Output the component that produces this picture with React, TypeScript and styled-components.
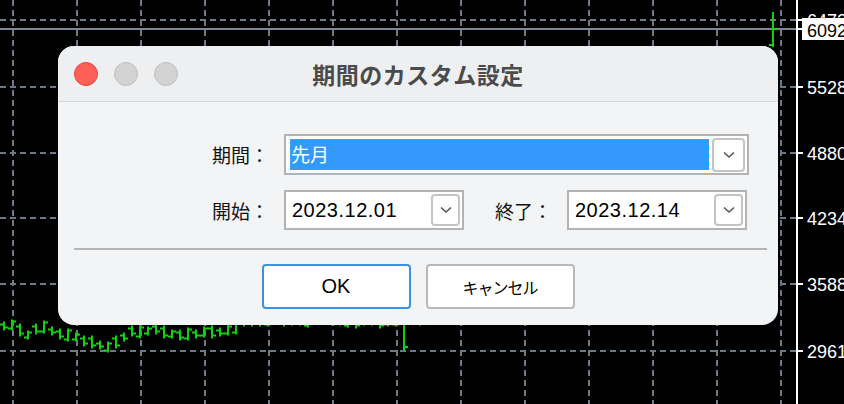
import styled, { createGlobalStyle } from 'styled-components';

const GlobalStyle = createGlobalStyle`
  html, body {
    margin: 0;
    padding: 0;
    background: #000;
  }
  #root {
    width: 844px;
    height: 404px;
    overflow: hidden;
  }
`;

const Screen = styled.div`
  position: relative;
  width: 844px;
  height: 404px;
  background: #000;
  font-family: 'Liberation Sans', 'Noto Sans CJK JP', sans-serif;
`;

const ChartSvg = styled.svg`
  display: block;
`;

const Dialog = styled.div`
  position: absolute;
  left: 58px;
  top: 46px;
  width: 720px;
  height: 279px;
  border-radius: 16px;
  overflow: hidden;
  background: #f3f4f6;
  display: flex;
  flex-direction: column;
`;

const TitleBar = styled.div`
  position: relative;
  height: 55px;
  flex: none;
  display: flex;
  align-items: center;
  justify-content: center;
  background: #eeeff1;
  border-bottom: 1px solid #d6d7d9;
`;

const Lights = styled.div`
  position: absolute;
  left: 16px;
  top: 16px;
  display: flex;
  gap: 16px;
`;

const Light = styled.span<{ $color: string; $edge: string }>`
  width: 22px;
  height: 22px;
  border-radius: 50%;
  background: ${(p) => p.$color};
  border: 1px solid ${(p) => p.$edge};
`;

const Title = styled.div`
  font-family: 'Noto Sans CJK JP', sans-serif;
  font-size: 23px;
  font-weight: 700;
  letter-spacing: 0.5px;
  color: #4b4b4b;
`;

const Body = styled.div`
  flex: 1;
  display: flex;
  flex-direction: column;
  padding: 32px 0 16px;
`;

const FormRow = styled.div<{ $mt?: number }>`
  display: flex;
  align-items: center;
  padding-left: 154px;
  margin-top: ${(p) => p.$mt ?? 0}px;
`;

const Label = styled.div<{ $ml?: number }>`
  width: 58px;
  margin-left: ${(p) => p.$ml ?? 0}px;
  margin-right: 14px;
  font-family: 'Noto Sans CJK JP', sans-serif;
  font-size: 19px;
  color: #111;
  white-space: nowrap;
`;

const Field = styled.div<{ $w: number; $h: number }>`
  box-sizing: border-box;
  width: ${(p) => p.$w}px;
  height: ${(p) => p.$h}px;
  border: 2px solid #b3b3b3;
  background: #fff;
  display: flex;
  align-items: center;
  gap: 3px;
  padding: 0 2px 0 4px;
`;

const Selection = styled.div`
  flex: 1;
  box-sizing: border-box;
  height: 31px;
  background: #3399fb;
  outline: 1px dotted #e0782a;
  outline-offset: -1px;
  color: #fff;
  font-family: 'Noto Sans CJK JP', sans-serif;
  font-size: 19px;
  line-height: 30px;
  padding-left: 1px;
`;

const DateText = styled.div`
  flex: 1;
  padding-left: 2px;
  font-size: 20px;
  letter-spacing: 0.5px;
  color: #000;
`;

const DropButton = styled.div<{ $w: number; $h: number }>`
  box-sizing: border-box;
  width: ${(p) => p.$w}px;
  height: ${(p) => p.$h}px;
  border: 2px solid #c4c4c4;
  border-radius: 4px;
  background: #fff;
  display: flex;
  align-items: center;
  justify-content: center;
`;

const Separator = styled.div`
  height: 2px;
  margin: 18px 11px 0 16px;
  background: #b5b5b5;
`;

const ButtonRow = styled.div`
  display: flex;
  justify-content: center;
  gap: 15px;
  margin-top: 14px;
`;

const Button = styled.div<{ $primary?: boolean }>`
  box-sizing: border-box;
  width: 149px;
  height: 45px;
  background: #fff;
  border: 2px solid ${(p) => (p.$primary ? '#3e8fe8' : '#b8b8b8')};
  border-radius: 4px;
  display: flex;
  align-items: center;
  justify-content: center;
  color: #000;
  font-size: ${(p) => (p.$primary ? 20 : 16)}px;
  letter-spacing: ${(p) => (p.$primary ? 0 : -1)}px;
  font-family: ${(p) =>
    p.$primary ? "'Liberation Sans', sans-serif" : "'Noto Sans CJK JP', sans-serif"};
`;

function Chevron() {
  return (
    <svg width="12" height="8" viewBox="0 0 12 8">
      <polyline points="1,1.5 6,6 11,1.5" fill="none" stroke="#555" strokeWidth="1.6" />
    </svg>
  );
}

const gridX = [13, 77, 141, 205, 269, 333, 397, 461, 525, 589, 653, 717, 781];
const gridY = [20, 87, 153, 218, 284, 351];
const priceLabels = ['6472', '5528', '4880', '4234', '3588', '2961'];

// bar centres, one every 8px from x = 4
const centers = [
  326, 325, 330, 335, 329, 327, 331, 334, 335, 337, 341, 342, 345, 347, 342, 337, 331, 332,
  331, 329, 332, 334, 335, 334, 334, 332, 332, 332, 330, 328, 322, 321, 320, 322, 319, 320,
  321, 320, 321, 320, 318, 319, 321, 322, 322, 321, 320, 322, 322, 321, 335, 319, 320,
];

const bars = centers.map((c, i) => {
  const x = 4 + i * 8;
  const len = x === 404 ? 30 : 9 + (i % 3) * 2;
  const hi = c - len / 2;
  const lo = c + len / 2;
  const up = i % 4 === 1 || i % 5 === 3;
  return { x, hi, lo, open: up ? lo - 2 : hi + 3, close: up ? hi + 2 : lo - 3 };
});
bars.push({ x: 773, hi: 12, lo: 47, open: 45, close: 29 });

function Chart() {
  return (
    <ChartSvg width="844" height="404" viewBox="0 0 844 404">
      <rect width="844" height="404" fill="#000" />
      {gridX.map((x) => (
        <line key={`v${x}`} x1={x} y1="0" x2={x} y2="404" stroke="#6d7987" strokeWidth="2" strokeDasharray="6 4" />
      ))}
      {gridY.map((y) => (
        <line key={`h${y}`} x1="0" y1={y} x2="797" y2={y} stroke="#6d7987" strokeWidth="2" strokeDasharray="6 4" />
      ))}
      <line x1="0" y1="29" x2="797" y2="29" stroke="#7d8896" strokeWidth="2" />
      {bars.map((b) => (
        <g key={b.x} stroke="#0fd20f" strokeWidth="2">
          <line x1={b.x} y1={b.hi} x2={b.x} y2={b.lo} />
          <line x1={b.x - 4} y1={b.open} x2={b.x} y2={b.open} />
          <line x1={b.x} y1={b.close} x2={b.x + 4} y2={b.close} />
        </g>
      ))}
      <line x1="797" y1="0" x2="797" y2="404" stroke="#fff" strokeWidth="2" />
      {gridY.map((y, i) => (
        <g key={`l${y}`}>
          <line x1="797" y1={y} x2="803" y2={y} stroke="#fff" strokeWidth="2" />
          <text x="807" y={y + 7} fill="#fff" fontSize="18" fontFamily="Liberation Sans, sans-serif">
            {priceLabels[i]}
          </text>
        </g>
      ))}
      {/* current price tag covers the top label */}
      <rect x="802" y="18" width="42" height="22" fill="#fff" />
      <line x1="797" y1="29" x2="803" y2="29" stroke="#fff" strokeWidth="2" />
      <text x="807" y="37" fill="#000" fontSize="18" fontFamily="Liberation Sans, sans-serif">
        6092
      </text>
    </ChartSvg>
  );
}

export default function App() {
  return (
    <>
      <GlobalStyle />
      <Screen>
        <Chart />
        <Dialog>
          <TitleBar>
            <Lights>
              <Light $color="#fe5f57" $edge="#e2463f" />
              <Light $color="#d3d3d3" $edge="#bebebe" />
              <Light $color="#d3d3d3" $edge="#bebebe" />
            </Lights>
            <Title>期間のカスタム設定</Title>
          </TitleBar>
          <Body>
            <FormRow>
              <Label>期間：</Label>
              <Field $w={465} $h={41}>
                <Selection>先月</Selection>
                <DropButton $w={33} $h={34}>
                  <Chevron />
                </DropButton>
              </Field>
            </FormRow>
            <FormRow $mt={15}>
              <Label>開始：</Label>
              <Field $w={180} $h={40}>
                <DateText>2023.12.01</DateText>
                <DropButton $w={29} $h={32}>
                  <Chevron />
                </DropButton>
              </Field>
              <Label $ml={31}>終了：</Label>
              <Field $w={180} $h={40}>
                <DateText>2023.12.14</DateText>
                <DropButton $w={29} $h={32}>
                  <Chevron />
                </DropButton>
              </Field>
            </FormRow>
            <Separator />
            <ButtonRow>
              <Button $primary>OK</Button>
              <Button>キャンセル</Button>
            </ButtonRow>
          </Body>
        </Dialog>
      </Screen>
    </>
  );
}
